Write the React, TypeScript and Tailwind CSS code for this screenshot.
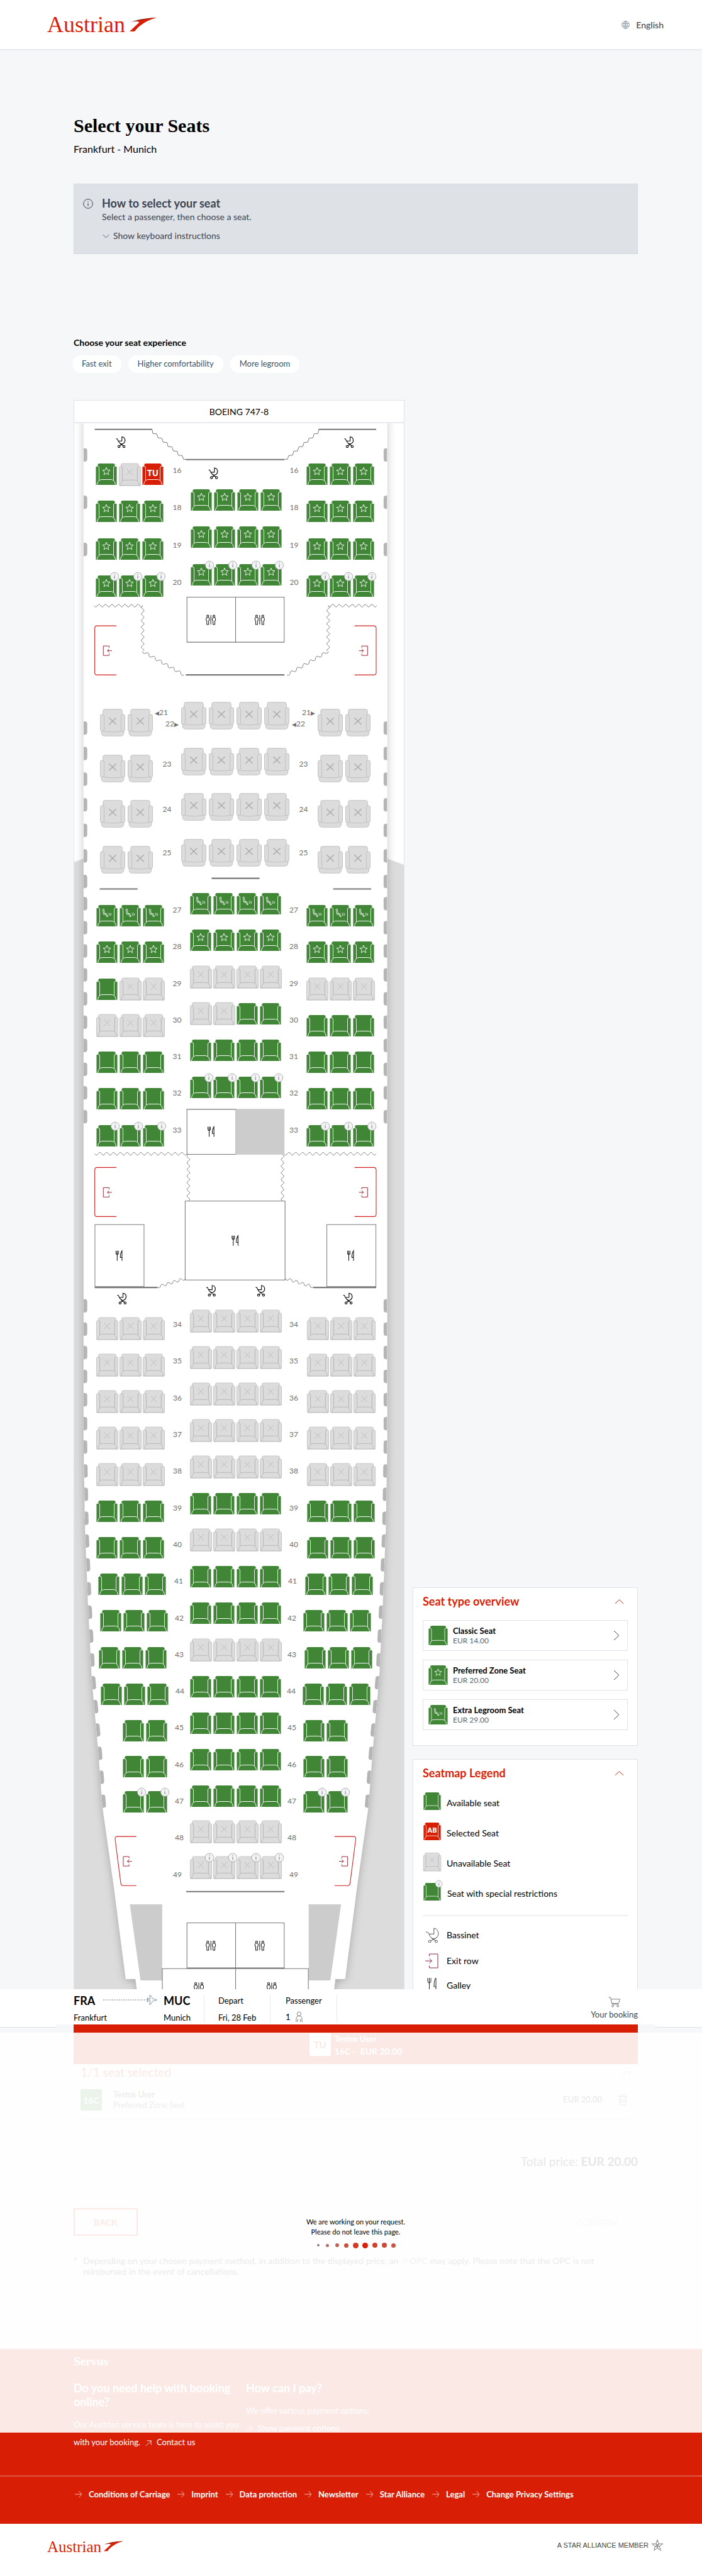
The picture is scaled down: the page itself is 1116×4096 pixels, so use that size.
import type { ReactNode } from "react";

const SANS = "font-['Lato','Noto_Sans',sans-serif]";
const SERIF = "font-['Liberation_Serif',serif]";

type Kind = "plain" | "star" | "legroom" | "off" | "selected";

const STAR = Array.from({ length: 10 }, (_, i) => {
  const r = i % 2 === 0 ? 7.4 : 3.3;
  const a = (Math.PI / 5) * i - Math.PI / 2;
  return `${(19 + r * Math.cos(a)).toFixed(1)},${(14.5 + r * Math.sin(a)).toFixed(1)}`;
}).join(" ");

function SeatIcon({ kind, info, initials = "TU", className }: { kind: Kind; info?: boolean; initials?: string; className?: string }) {
  const off = kind === "off";
  const fill = off ? "#dcdcdc" : kind === "selected" ? "#d81e05" : "#418537";
  const line = off ? "#b8b8b8" : "#ffffff";
  const edge = off ? "#c4c4c4" : "none";
  return (
    <svg viewBox="0 0 38 39" overflow="visible" className={className} aria-hidden="true">
      <path d="M3.3 39V3.2Q3.3 0 6.5 0H31.5Q34.7 0 34.7 3.2V39Z" fill={fill} stroke={edge} strokeWidth="1" />
      <path d="M0 7.2Q0 5.5 1.8 5.5H3.6Q5.8 5.5 5.8 8V39H1Q0 39 0 38Z" fill={fill} stroke={edge} />
      <path d="M38 7.2Q38 5.5 36.2 5.5H34.4Q32.2 5.5 32.2 8V39H37Q38 39 38 38Z" fill={fill} stroke={edge} />
      <path d="M3.2 5.2Q5.8 5.2 5.8 8V33.5M34.8 5.2Q32.2 5.2 32.2 8V33.5" fill="none" stroke={line} />
      <path d="M2.4 38.7C3.4 32 6.6 29.3 11 29.3H27C31.4 29.3 34.6 32 35.6 38.7" fill={fill} stroke={line} strokeWidth="1.1" />
      {off && <path d="M0.5 39H37.5M13.5 9.5L24 20.5M24 9.5L13.5 20.5" fill="none" stroke="#b8b8b8" />}
      {kind === "star" && <polygon points={STAR} fill="none" stroke="#fff" strokeLinejoin="round" />}
      {kind === "legroom" && (
        <g fill="none" stroke="#fff" strokeWidth="1">
          <circle cx="12.6" cy="8.6" r="1.4" />
          <path d="M11.6 10.6L12.8 17H16.6L18.4 21.2H20.4L18.2 15.6H14.8L14 10.6M22 14.4L24 17L22 19.6M25 14.4L27 17L25 19.6" />
        </g>
      )}
      {kind === "selected" && (
        <text x="19" y="22.4" textAnchor="middle" fontSize="15.5" fontWeight="700" fill="#fff" fontFamily="Noto Sans, sans-serif">
          {initials}
        </text>
      )}
      {info && (
        <g>
          <circle cx="34" cy="2" r="7.6" fill="#f3f4f6" stroke="#9a9a9a" strokeWidth="0.9" />
          <path d="M34 0.4V6M34 -2.6V-1.2" stroke="#777" strokeWidth="1.1" />
        </g>
      )}
    </svg>
  );
}

function BusinessIcon() {
  return (
    <svg viewBox="0 0 46 50" className="h-[44px] w-[40px]" aria-hidden="true">
      <g fill="#dcdcdc" stroke="#bcbcbc">
        <path d="M2.5 40H43.5V43Q43.5 49.5 37.5 49.5H8.5Q2.5 49.5 2.5 43Z" />
        <path d="M5.5 40V3.5Q5.5 .5 8.5 .5H37.5Q40.5 .5 40.5 3.5V40L38.5 41Q23 43.5 7.5 41Z" />
        <rect x=".5" y="10" width="7" height="31" rx="3.4" />
        <rect x="38.5" y="10" width="7" height="31" rx="3.4" />
      </g>
      <path d="M16.5 16L29.5 28.5M29.5 16L16.5 28.5" stroke="#ababab" strokeWidth="1.7" />
    </svg>
  );
}

const KINDS: Record<string, Kind> = { p: "plain", s: "star", l: "legroom", x: "off", t: "selected" };

type Row = { n: number; seats: string; info?: boolean; pad?: string };

function SeatRow({ row, letters }: { row: Row; letters: string }) {
  return (
    <div className={`flex items-start gap-[3px] ${row.pad ?? ""}`}>
      {row.seats.split("").map((c, i) => (
        <button
          key={i}
          type="button"
          disabled={c === "x"}
          aria-label={`Seat ${row.n}${letters[i]}`}
          className="flex h-[34px] w-[34px] items-center justify-center"
        >
          <SeatIcon kind={KINDS[c]} info={row.info} className={c === "x" ? "h-[35px] w-[35px] shrink-0" : "h-[34px] w-[34px]"} />
        </button>
      ))}
    </div>
  );
}

function BusinessColumn({ letters, className }: { letters: string; className: string }) {
  return (
    <div className={`grid h-[290px] auto-rows-fr ${className}`}>
      {[22, 23, 24, 25].map((n) => (
        <div key={n} className="flex items-start gap-1">
          {letters.split("").map((l) => (
            <button key={l} type="button" disabled aria-label={`Seat ${n}${l}`}>
              <BusinessIcon />
            </button>
          ))}
        </div>
      ))}
    </div>
  );
}

function Column({ rows, letters, className }: { rows: Row[]; letters: string; className: string }) {
  return (
    <div className={`grid auto-rows-fr ${className}`}>
      {rows.map((r) => (
        <SeatRow key={r.n} row={r} letters={letters} />
      ))}
    </div>
  );
}

function Numbers({ from, to, skip, className, pads }: { from: number; to: number; skip?: number; className: string; pads?: Record<number, string> }) {
  const list = Array.from({ length: to - from + 1 }, (_, i) => from + i).filter((n) => n !== skip);
  return (
    <div className={`grid auto-rows-fr text-center text-[12px] leading-5 text-[#6f6f6f] ${className}`}>
      {list.map((n) => (
        <div key={n} className={pads?.[n] ?? ""}>
          {n}
        </div>
      ))}
    </div>
  );
}

function BusinessNumbers({ side }: { side: "left" | "right" }) {
  const left = side === "left";
  return (
    <div className="mt-2 grid h-[290px] auto-rows-fr text-center text-[12px] leading-5 text-[#6f6f6f]">
      <div className="flex flex-col leading-[17px]">
        <span className={left ? "pl-[3px] text-left" : "pr-1 text-right"}>
          {left && <span className="text-[9px]">◀</span>}21{!left && <span className="text-[9px]">▶</span>}
        </span>
        <span className={left ? "pr-1 text-right" : "pl-1 text-left"}>
          {!left && <span className="text-[9px]">◀</span>}22{left && <span className="text-[9px]">▶</span>}
        </span>
      </div>
      <div className="pt-2">23</div>
      <div className="pt-2">24</div>
      <div className="pt-1">25</div>
    </div>
  );
}

function make(list: string, start: number, extra?: Record<number, Partial<Row>>): Row[] {
  return list.split(" ").map((seats, i) => ({ n: start + i, seats, ...(extra?.[start + i] ?? {}) }));
}

const frontLeft: Row[] = [
  { n: 16, seats: "sxt" },
  { n: 18, seats: "sss" },
  { n: 19, seats: "sss" },
  { n: 20, seats: "sss", info: true },
];
const frontRight = frontLeft.map((r) => ({ ...r, seats: "sss" }));
const frontCentre = make("ssss ssss ssss", 18, { 20: { info: true } });

const midLeft = make("lll sss pxx xxx ppp ppp ppp", 27, { 33: { info: true } });
const midCentre = make("llll ssss xxxx xxpp pppp pppp", 27, { 32: { info: true } });
const midRight = make("lll sss xxx ppp ppp ppp ppp", 27, { 33: { info: true } });

const rearLeft = make("xxx xxx xxx xxx xxx ppp ppp ppp ppp ppp ppp", 34, {
  41: { pad: "pl-[3px]" },
  42: { pad: "pl-[6px]" },
  43: { pad: "pl-[4px]" },
  44: { pad: "pl-[7px]" },
});
const rearRight = make("xxx xxx xxx xxx xxx ppp ppp ppp ppp ppp ppp", 34, {
  41: { pad: "justify-end pr-[3px]" },
  42: { pad: "justify-end pr-[6px]" },
  43: { pad: "justify-end pr-[4px]" },
  44: { pad: "justify-end pr-[7px]" },
});
const tailLeft = make("pp pp pp", 45, { 45: { pad: "pl-[42px]" }, 46: { pad: "pl-[42px]" }, 47: { pad: "pl-[42px]", info: true } });
const tailRight = make("pp pp pp", 45, {
  45: { pad: "justify-end pr-[42px]" },
  46: { pad: "justify-end pr-[42px]" },
  47: { pad: "justify-end pr-[42px]", info: true },
});
const rearCentre = make("xxxx xxxx xxxx xxxx xxxx pppp xxxx pppp pppp xxxx pppp pppp pppp", 34);
const tailCentre = make("pppp xxxx xxxx", 47, { 49: { info: true } });

/* ---------- cabin drawing ---------- */

function wave(x1: number, y1: number, x2: number, y2: number, cycles: number, amp = 2.4) {
  const len = Math.hypot(x2 - x1, y2 - y1);
  const ux = (x2 - x1) / len;
  const uy = (y2 - y1) / len;
  const steps = Math.round(cycles * 12);
  let d = "";
  for (let i = 0; i <= steps; i++) {
    const t = (i / steps) * len;
    const o = Math.sin((i / steps) * cycles * 2 * Math.PI) * amp;
    d += `${i ? "L" : "M"}${(x1 + ux * t - uy * o).toFixed(1)} ${(y1 + uy * t + ux * o).toFixed(1)}`;
  }
  return d;
}

const EDGE: [number, number][] = [
  [149, 750],
  [149, 2600],
  [151.6, 2750],
  [156.8, 2883],
  [163.5, 3017],
  [175.4, 3150],
  [183, 3250],
  [203, 3390],
  [225, 3559.5],
];

function edgeX(y: number) {
  for (let i = 1; i < EDGE.length; i++) {
    if (y <= EDGE[i][1]) {
      const [xa, ya] = EDGE[i - 1];
      const [xb, yb] = EDGE[i];
      return xa + ((xb - xa) * (y - ya)) / (yb - ya);
    }
  }
  return 225;
}

const WINDOWS = [
  807, 892, 977, 1298, 1344, 1390, 1436, 1482, 1528, 1574, 1614, 1657, 1699, 1742, 1785, 1827, 1869, 1912, 1954, 1997, 2337, 2379,
  2421, 2464, 2506, 2549, 2591, 2634, 2676, 2719, 2760, 2803, 2846, 2888, 2931, 2974, 3015, 3058, 3100, 3142, 3185, 3228,
];

const BODY = [...EDGE, [242.6, 3559.5], [246.5, 3590]] as [number, number][];
const BODY_POINTS = [...BODY, ...BODY.map(([x, y]) => [846 - x, y]).reverse()].map((p) => p.join(",")).join(" ");

function Stroller({ x, y }: { x: number; y: number }) {
  return (
    <g transform={`translate(${x} ${y})`} fill="none" stroke="#111" strokeWidth="1.3">
      <path d="M-8.500-6H-6.500L-4.500-2H2V-9.500C8-9 9.500-2 5.500 1.700C2.500 4.500-2 3.200-4.500-2M-3 7L5 1.800M5.500 7L-1.500 2.400" />
      <circle cx="-3.200" cy="7.800" r="1.900" />
      <circle cx="5.800" cy="7.800" r="1.900" />
    </g>
  );
}

function Cutlery({ x, y }: { x: number; y: number }) {
  return (
    <g transform={`translate(${x} ${y})`} fill="none" stroke="#111" strokeWidth="1.2">
      <path d="M-5.600-9V-4.500Q-5.600-2.500-3.400-2.500Q-1.200-2.500-1.200-4.500V-9M-3.400-9V9M5.200 9V-9Q2-4 2.200 3H5" />
    </g>
  );
}

function Toilet({ x, y }: { x: number; y: number }) {
  return (
    <g transform={`translate(${x} ${y})`} fill="none" stroke="#222" strokeWidth="1.2">
      <circle cx="-5.600" cy="-6.400" r="1.800" />
      <circle cx="5.600" cy="-6.400" r="1.800" />
      <path d="M0-8.500V8.500M-7.200 8.500V2.400L-8.400 1V-2.400Q-8.200-4.200-5.600-4.200T-2.800-2.400V1L-4 2.400V8.500ZM4 8.500V2.400L2.800 1V-2.400Q3-4.200 5.600-4.200T8.400-2.400V1L7.200 2.400V8.500Z" />
    </g>
  );
}

function ExitSign({ x, y }: { x: number; y: number }) {
  return (
    <g transform={`translate(${x} ${y})`} fill="none" stroke="#9d2235" strokeWidth="1.1">
      <path d="M3-5.500V-8.500H-7.500V8.500H3V5.500M8 0H0M3-3.200L0 0L3 3.200" />
    </g>
  );
}

function SideDecor() {
  return (
    <g fill="none" stroke="#777" strokeWidth="1.1">
      <path d="M169 773H272.6" strokeWidth="2.4" />
      <path d="M272.6 773l1.4 7.5 7 .6 2.2 7.2 7 .6 2.2 7.2 7 .6 2 7.2 7 .6 2.4 7.2 7 .6 2 7.2 7 .6 2.6 6.8h5" />
      <path d={wave(168, 1090, 256, 1090, 7.5)} />
      <path d={wave(255.5, 1090, 255.5, 1171, 6.8)} />
      <path d={wave(255.5, 1172, 330, 1214.5, 6.5)} />
      <path d={wave(169, 2075.7, 335.5, 2075.7, 13.5)} />
      <path d={wave(338, 2077, 338, 2160.5, 7)} />
      <path d={wave(282.5, 2315, 332.3, 2300, 4.5)} />
      <rect x="169.4" y="2203" width="88.6" height="111.5" fill="#fff" />
      <path d="M169 2316H282.5" strokeWidth="2.6" />
      <path d="M178 1599.4H246.5" strokeWidth="2.4" />
      <path d="M232.3 3425.3H290.8V3562.3H251.7Z" fill="#ccc" stroke="none" />
      <g stroke="#d02020" strokeWidth="1.2">
        <path d="M208 1126.3H173Q169 1126.3 169 1131V1210Q169 1214.5 173 1214.5H208" />
        <path d="M208 2100.3H173Q169 2100.3 169 2105V2184Q169 2188.5 173 2188.5H208" />
        <path d="M244 3303.3H210Q205.4 3303.3 205.8 3308L216 3387Q216.5 3391.7 220 3391.7H244" />
      </g>
      <ExitSign x={192} y={1171} />
      <ExitSign x={192} y={2145} />
      <ExitSign x={228} y={3348} />
    </g>
  );
}

function Cabin() {
  return (
    <svg viewBox="132 762 595 2816" preserveAspectRatio="none" className="absolute inset-0 h-full w-full" aria-hidden="true">
      <defs>
        <filter id="hull" x="-20%" y="-2%" width="140%" height="104%">
          <feDropShadow dx="0" dy="3" stdDeviation="8" floodColor="#000" floodOpacity="0.24" />
        </filter>
        <clipPath id="hullClip">
          <polygon points={BODY_POINTS} />
        </clipPath>
      </defs>
      <rect x="132" y="762" width="595" height="2816" fill="#fff" />
      <path d="M132 1551L149 1545H697L727 1556V3578H132Z" fill="#dcdcdc" />
      <polygon points={BODY_POINTS} fill="#fff" filter="url(#hull)" />
      <g clipPath="url(#hullClip)" fill="#b5b5b5">
        {WINDOWS.map((y) => {
          const x = edgeX(y + 12);
          const slope = (Math.atan((edgeX(y + 24) - edgeX(y)) / 24) * 180) / Math.PI;
          return (
            <g key={y}>
              <rect x={x - 8} y={y} width="14.5" height="24" rx="4.5" transform={`rotate(${-slope} ${x} ${y + 12})`} />
              <rect x={846 - x - 6.5} y={y} width="14.5" height="24" rx="4.5" transform={`rotate(${slope} ${846 - x} ${y + 12})`} />
            </g>
          );
        })}
      </g>
      <SideDecor />
      <g transform="translate(846 0) scale(-1 1)">
        <SideDecor />
      </g>
      <g fill="none" stroke="#777" strokeWidth="1.2">
        <path d="M333.5 827.3H511.5M333.5 1214.5H511.5M334 3402.4H511.5M380 1580.4H466.5" strokeWidth="2.4" />
        <path d="M335.5 1074.7H511V1155.7H335.5ZM423.3 1074.7V1155.7" />
        <path d="M335.5 1995.7H424V2076.7H335.5Z" fill="#fff" />
        <path d="M424 1995H511.5V2077.3H424Z" fill="#ccc" stroke="none" />
        <path d="M332.3 2160.7H512.6V2302.7H332.3Z" fill="#fff" />
        <path d="M335.5 3458.7H511V3539.7H335.5ZM423.3 3458.7V3600M291 3600V3541H554.6V3600" />
      </g>
      <Stroller x={216} y={796} />
      <Stroller x={628} y={796} />
      <Stroller x={383} y={852} />
      <Stroller x={218} y={2336} />
      <Stroller x={379} y={2322} />
      <Stroller x={468} y={2322} />
      <Stroller x={626} y={2336} />
      <Toilet x={378.6} y={1115.3} />
      <Toilet x={466.8} y={1115.3} />
      <Toilet x={378.6} y={3499.3} />
      <Toilet x={466.8} y={3499.3} />
      <Toilet x={356.9} y={3574.5} />
      <Toilet x={488.5} y={3574.5} />
      <Cutlery x={379} y={2036} />
      <Cutlery x={422.5} y={2232} />
      <Cutlery x={213} y={2259} />
      <Cutlery x={631} y={2259} />
    </svg>
  );
}

const NUM_LEFT: Record<number, string> = { 41: "pl-1", 42: "pl-1.5", 43: "pl-1.5", 44: "pl-2", 45: "pl-1.5", 46: "pl-1.5", 47: "pl-1.5", 48: "pl-1.5" };
const NUM_RIGHT: Record<number, string> = { 41: "pr-1", 42: "pr-1.5", 43: "pr-1.5", 44: "pr-2", 45: "pr-1.5", 46: "pr-1.5", 47: "pr-1.5", 48: "pr-1.5" };

function SeatMap() {
  return (
    <section className="w-[526px] shrink-0 border border-b-0 border-[#dfe3e8] bg-white">
      <h2 className="flex h-9 items-center justify-center border-b-2 border-[#e6e9ed] text-[14px] text-black">BOEING 747-8</h2>
      <div className="relative overflow-hidden pt-[64px] pb-[134px]">
        <Cabin />
        <div className="relative">
          <div className="grid grid-cols-[108px_43px_145px_39px_108px] pl-[34px]">
            <Column rows={frontLeft} letters="ABC" className="h-[237px]" />
            <Numbers from={16} to={20} skip={17} className="mt-px h-[237px]" />
            <Column rows={frontCentre} letters="DEFG" className="mt-[41px] h-[178px]" />
            <Numbers from={16} to={20} skip={17} className="mt-px h-[237px]" />
            <Column rows={frontRight} letters="HJK" className="h-[237px]" />
          </div>
          <div className="mt-[141px] grid grid-cols-[84px_45px_172px_45px_84px] items-start pl-[41px]">
            <BusinessColumn letters="AC" className="mt-[11px]" />
            <BusinessNumbers side="left" />
            <BusinessColumn letters="DEFG" className="" />
            <BusinessNumbers side="right" />
            <BusinessColumn letters="HK" className="mt-[11px]" />
          </div>
          <div className="mt-[3px] grid grid-cols-[108px_41px_145px_40px_108px] items-start pl-[35px]">
            <Column rows={midLeft} letters="ABC" className="mt-[19px] h-[408px]" />
            <Numbers from={27} to={33} className="mt-[17px] h-[408px]" />
            <Column rows={midCentre} letters="DEFG" className="h-[350px]" />
            <Numbers from={27} to={33} className="mt-[17px] h-[408px]" />
            <Column rows={midRight} letters="HJK" className="mt-[19px] h-[408px]" />
          </div>
          <div className="mt-[236px] grid grid-cols-[115px_34px_145px_34px_114px] items-start pl-[35px]">
            <div className="mt-3">
              <Column rows={rearLeft} letters="ABC" className="h-[640px]" />
              <Column rows={tailLeft} letters="AC" className="h-[170px]" />
            </div>
            <Numbers from={34} to={49} className="mt-[13px] h-[933px] pr-[6px]" pads={NUM_LEFT} />
            <div>
              <Column rows={rearCentre} letters="DEFG" className="h-[756px]" />
              <Column rows={tailCentre} letters="DEFG" className="h-[170px]" />
            </div>
            <Numbers from={34} to={49} className="mt-[13px] h-[933px] pl-[6px]" pads={NUM_RIGHT} />
            <div className="mt-3 [&_.grid>div:not([class*=justify-end])]:justify-end">
              <Column rows={rearRight} letters="HJK" className="h-[640px]" />
              <Column rows={tailRight} letters="HK" className="h-[170px]" />
            </div>
          </div>
        </div>
      </div>
    </section>
  );
}

/* ---------- side panels ---------- */

function Chevron({ d, className }: { d: string; className: string }) {
  return (
    <svg viewBox="0 0 16 16" fill="none" stroke="currentColor" className={className} aria-hidden="true">
      <path d={d} />
    </svg>
  );
}

const UP = "M1 11.5L8 5L15 11.5";
const RIGHT = "M4 .5L12 8L4 15.5";

function CardTitle({ children }: { children: ReactNode }) {
  return (
    <button type="button" className="flex w-full items-center justify-between pr-[6px] text-left text-[18px] leading-6 font-bold text-[#d81e05]">
      {children}
      <Chevron d={UP} className="h-[15px] w-[15px]" />
    </button>
  );
}

const TYPES: { name: string; price: string; kind: Kind }[] = [
  { name: "Classic Seat", price: "EUR 14.00", kind: "plain" },
  { name: "Preferred Zone Seat", price: "EUR 20.00", kind: "star" },
  { name: "Extra Legroom Seat", price: "EUR 29.00", kind: "legroom" },
];

function Sidebar() {
  return (
    <aside className="flex flex-1 flex-col justify-end">
      <section className="border border-[#dfe3e8] bg-white px-[15px] pt-[9px] pb-[24px]">
        <CardTitle>Seat type overview</CardTitle>
        <div className="mt-[18px] flex flex-col gap-[14px]">
          {TYPES.map((t) => (
            <button key={t.name} type="button" className="flex h-[49px] items-center border border-[#dfe3e8] px-[8px] text-left">
              <SeatIcon kind={t.kind} className="h-[31px] w-[31px]" />
              <span className="ml-2 flex-1">
                <span className="block text-[13px] leading-4 font-bold text-black">{t.name}</span>
                <span className="block text-[12px] leading-4 text-[#5a6675]">{t.price}</span>
              </span>
              <Chevron d={RIGHT} className="mr-px h-[17px] w-[16px] text-[#444]" />
            </button>
          ))}
        </div>
      </section>
      <section className="mt-[21px] h-[366px] overflow-hidden border border-b-0 border-[#dfe3e8] bg-white px-[15px] pt-[9px]">
        <CardTitle>Seatmap Legend</CardTitle>
        <ul className="mt-[11px] text-[14px] text-black">
          <li className="flex h-[48px] items-center">
            <SeatIcon kind="plain" className="mb-1 ml-px h-[28px] w-[28px]" />
            <span className="ml-[9px]">Available seat</span>
          </li>
          <li className="flex h-[48px] items-center">
            <SeatIcon kind="selected" initials="AB" className="mb-1 ml-px h-[28px] w-[28px]" />
            <span className="ml-[9px]">Selected Seat</span>
          </li>
          <li className="flex h-[48px] items-center">
            <SeatIcon kind="off" className="mb-1 ml-px h-[29px] w-[28px]" />
            <span className="ml-[9px]">Unavailable Seat</span>
          </li>
          <li className="flex h-[48px] items-center">
            <SeatIcon kind="plain" info className="mb-1 ml-px h-[28px] w-[28px]" />
            <span className="ml-[10px]">Seat with special restrictions</span>
          </li>
        </ul>
        <ul className="mt-[11px] border-t-2 border-[#eceef1] pt-[9px] text-[14px] text-black">
          <li className="flex h-[41px] items-center">
            <svg viewBox="-12 -12 24 24" className="ml-[2px] h-[24px] w-[26px]" aria-hidden="true">
              <g fill="none" stroke="#555" strokeWidth="1">
                <path d="M-10-5H-8.5Q-6.5-5-5.2-2L-4.5-1.8H2.8V-11C9.5-10.6 12.5-1 7 4C3.5 7-3 6-4.8-1.8M-2.5 9.4L6 4.6M6 9.4L-1.5 4.6" />
                <circle cx="-3.8" cy="10" r="1.9" />
                <circle cx="6.6" cy="10" r="1.9" />
              </g>
            </svg>
            <span className="ml-[10px]">Bassinet</span>
          </li>
          <li className="flex h-[41px] items-center">
            <svg viewBox="0 0 24 24" className="ml-[2px] h-[24px] w-[24px]" fill="none" stroke="#8c2a4a" aria-hidden="true">
              <path d="M8.5 4.5V1H22V23H8.5V19.5M2 12H12.5M8.5 8L12.5 12L8.5 16" />
            </svg>
            <span className="ml-[12px]">Exit row</span>
          </li>
          <li className="flex h-[36px] items-center">
            <svg viewBox="0 0 24 24" className="ml-[2px] h-[24px] w-[24px]" fill="none" stroke="#222" aria-hidden="true">
              <path d="M6 1V6Q6 9 8.5 9T11 6V1M8.5 1V23M19 23V1Q16 3 16 15H19" />
            </svg>
            <span className="ml-[12px]">Galley</span>
          </li>
        </ul>
      </section>
    </aside>
  );
}

/* ---------- brand marks ---------- */

function Brand({ small }: { small?: boolean }) {
  return (
    <a href="#home" className={`flex items-end text-[#d81e05] ${SERIF}`} aria-label="Austrian home">
      <span className={small ? "text-[25px] leading-[24px]" : "text-[36px] leading-[34px]"}>Austrian</span>
      <svg viewBox="0 0 43 22" className={small ? "mb-[5px] ml-1 h-[17px] w-[31px]" : "mb-[6px] ml-[7px] h-[22px] w-[43px]"} aria-hidden="true">
        <path d="M43 0C27 .6 12 3 1.400 7.200C6 6 11 5.600 15.500 6.400Z" fill="#7a2a22" />
        <path d="M43 0C30 1.200 18 3.600 8 6C11.500 5.800 14 6.200 15.500 7.400L0 22H8C13.500 14 26 4.600 43 0Z" fill="currentColor" />
      </svg>
    </a>
  );
}

function Diagonal() {
  return (
    <svg viewBox="0 0 12 12" className="inline-block h-[10px] w-[10px]" fill="none" stroke="currentColor" aria-hidden="true">
      <path d="M1 11L11 1M3 1H11V9" />
    </svg>
  );
}

const DOTS = [
  "h-[4px] w-[4px] bg-[#9b7b7b]",
  "h-[5px] w-[5px] bg-[#b0706a]",
  "h-[6px] w-[6px] bg-[#c06055]",
  "h-[7px] w-[7px] bg-[#c9503f]",
  "h-[9px] w-[9px] bg-[#d23a25]",
  "h-[9px] w-[9px] bg-[#d81e05]",
  "h-[8px] w-[8px] bg-[#d0402c]",
  "h-[8px] w-[8px] bg-[#cc4a38]",
  "h-[7px] w-[7px] bg-[#c65545]",
];

const LINKS = ["Conditions of Carriage", "Imprint", "Data protection", "Newsletter", "Star Alliance", "Legal", "Change Privacy Settings"];

function BookingBar() {
  return (
    <div className="relative flex h-[61px] border-b border-[#dfe3e8] bg-white pr-[102px] pl-[117px] text-[13px] text-black">
      <div className="my-[9px] flex h-[44px] border-r border-[#e6e9ed] pr-[22px]">
        <div className="flex w-[53px] flex-col justify-between">
          <span className="text-[18px] leading-[18px] font-bold">FRA</span>
          <span className="leading-[15px]">Frankfurt</span>
        </div>
        <svg viewBox="0 0 86 16" className="-ml-[6px] h-[16px] w-[86px]" fill="none" aria-hidden="true">
          <path d="M0 8H70" stroke="#8a97a6" strokeWidth="1.4" strokeDasharray="1.6 2" />
          <path d="M70 6.800H75L73.500 1H75.500L79.500 6.800H83.500L85.300 8L83.500 9.200H79.500L75.500 15H73.500L75 9.200H72.500L71 11H70L71 8L70 5H71L72.500 6.800" stroke="#7a8696" strokeWidth=".9" />
        </svg>
        <div className="ml-[10px] flex w-[42px] flex-col justify-between">
          <span className="text-[18px] leading-[18px] font-bold">MUC</span>
          <span className="leading-[15px]">Munich</span>
        </div>
      </div>
      <div className="my-[9px] flex h-[44px] w-[105px] flex-col justify-between border-r border-[#e6e9ed] pl-[22px]">
        <span className="leading-[18px]">Depart</span>
        <span className="leading-[15px]">Fri, 28 Feb</span>
      </div>
      <div className="my-[9px] flex h-[44px] w-[106px] flex-col justify-between border-r border-[#e6e9ed] pl-[24px]">
        <span className="leading-[18px]">Passenger</span>
        <span className="flex items-center gap-2 leading-[18px]">
          1
          <svg viewBox="0 0 12 19" className="h-[18px] w-[11px]" fill="none" stroke="#777" aria-hidden="true">
            <circle cx="6" cy="4.200" r="3.400" />
            <path d="M1 18.500V13Q1 8 6 8T11 13V18.500M3.600 18.500V13M8.400 18.500V13" />
          </svg>
        </span>
      </div>
      <a href="#booking" className="ml-auto flex flex-col items-center pt-[12px] text-[13px] leading-[18px] text-[#3d4a5a]">
        <svg viewBox="0 0 20 18" className="h-[17px] w-[20px]" fill="none" stroke="#777" aria-hidden="true">
          <path d="M0 1H3L6 12.500H16.500M4 4H19L17 11H5.700" />
          <circle cx="7" cy="15.500" r="1.600" />
          <circle cx="15.500" cy="15.500" r="1.600" />
        </svg>
        <span className="mt-[2px]">Your booking</span>
      </a>
    </div>
  );
}

function Selection() {
  return (
    <div className="pr-[102px] pl-[117px]">
      <div className="flex h-[63px] items-start justify-center bg-[#d81e05] pt-[13px] text-[14px] leading-5 font-bold text-white">
        <span className="mt-px flex h-[36px] w-[34px] items-center justify-center rounded-[2px] bg-white text-[15px] text-[#d81e05]">TU</span>
        <span className="ml-[6px]">
          <span className="block text-[13px] font-bold">Testos User</span>
          <span className="block">16C - &nbsp;EUR 20.00</span>
        </span>
      </div>
      <div className="px-[11px]">
        <button type="button" className="mt-px flex w-full items-center justify-between text-[19px] leading-[24px] text-[#d81e05]">
          1/1 seat selected
          <Chevron d={UP} className="h-[13px] w-[13px]" />
        </button>
        <div className="mt-[15px] flex items-center border-b border-[#c9ced6] pb-[13px]">
          <span className="flex h-[34px] w-[34px] items-center justify-center rounded-[2px] bg-[#418537] text-[14px] font-bold text-white">16C</span>
          <span className="ml-[18px] flex-1 text-[13px] leading-[17px] text-black">
            <span className="block">Testos User</span>
            <span className="block text-[#444]">Preferred Zone Seat</span>
          </span>
          <span className="text-[13px] text-black">EUR 20.00</span>
          <button type="button" aria-label="Remove seat" className="mr-[6px] ml-[26px]">
            <svg viewBox="0 0 14 18" className="h-[18px] w-[14px]" fill="none" stroke="#444" aria-hidden="true">
              <path d="M0 3.500H14M4.500 3.500V1H9.500V3.500M2 3.500V17H12V3.500M5 7V14M9 7V14" />
            </svg>
          </button>
        </div>
      </div>
      <p className="mt-[47px] border-t border-[#dfe3e8] pt-[7px] text-right text-[19px] leading-[24px] text-black">
        Total price: <b>EUR 20.00</b>
      </p>
      <div className="mt-[62px] flex justify-between">
        <button type="button" className="h-[44px] w-[102px] rounded-[2px] border-2 border-[#d81e05] text-[14px] font-bold text-[#d81e05]">
          BACK
        </button>
        <button type="button" className="h-[44px] w-[129px] text-[14px] font-bold text-[#c8c8c8]">
          CONFIRM
        </button>
      </div>
      <p className="mt-[31px] flex text-[14px] leading-[17px] text-[#222]">
        <span className="w-[15px] shrink-0">*</span>
        <span>
          Depending on your chosen payment method, in addition to the displayed price, an{" "}
          <a href="#opc" className="text-[#666]">
            <Diagonal /> OPC
          </a>{" "}
          may apply. Please note that the OPC is not reimbursed in the event of cancellations.
        </span>
      </p>
    </div>
  );
}

export default function App() {
  return (
    <div className={`min-h-screen bg-[#f5f7f9] text-[14px] ${SANS}`}>
      <header className="flex h-20 items-center justify-between border-b-2 border-[#e6eaee] bg-white pr-[61px] pl-[75px]">
        <Brand />
        <button type="button" className="flex items-center gap-[10px] text-[14px] font-medium text-[#3d4a5a]">
          <svg viewBox="0 0 14 14" className="h-[13px] w-[13px]" fill="none" stroke="#8793a0" aria-hidden="true">
            <circle cx="7" cy="7" r="6.300" />
            <ellipse cx="7" cy="7" rx="2.800" ry="6.300" />
            <path d="M7 .7V13.300M1 5H13M1 9H13" />
          </svg>
          English
        </button>
      </header>
      <main className="pr-[102px] pl-[117px]">
        <h1 className={`pt-[102px] text-[30px] leading-9 font-bold text-black ${SERIF}`}>Select your Seats</h1>
        <p className="mt-[7px] text-[16px] leading-6 text-black">Frankfurt - Munich</p>
        <section className="mt-[43px] flex h-[112px] border border-[#d5d9df] bg-[#dee1e6] pt-[18px] pl-[14px] text-[#3d4350]">
          <svg viewBox="0 0 16 16" className="mt-[5px] h-[16px] w-[16px]" fill="none" stroke="currentColor" aria-hidden="true">
            <circle cx="8" cy="8" r="7.300" />
            <path d="M8 6.500V12M8 4V5.200" />
          </svg>
          <div className="ml-[14px]">
            <h2 className="text-[18px] leading-6 font-bold">How to select your seat</h2>
            <p className="text-[14px] leading-5">Select a passenger, then choose a seat.</p>
            <button type="button" className="mt-[10px] flex items-center gap-[5px] text-[14px] leading-5">
              <Chevron d="M2 5L8 11L14 5" className="h-[13px] w-[13px]" />
              Show keyboard instructions
            </button>
          </div>
        </section>
        <h2 className="mt-[131px] text-[14px] leading-5 font-bold text-black">Choose your seat experience</h2>
        <div className="-ml-[2px] mt-[10px] flex gap-[11px] text-[13px] text-[#3d5366]">
          {["Fast exit", "Higher comfortability", "More legroom"].map((t) => (
            <button key={t} type="button" className="h-[28px] rounded-full bg-white px-[15px]">
              {t}
            </button>
          ))}
        </div>
        <div className="mt-[43px] flex gap-[13px]">
          <SeatMap />
          <Sidebar />
        </div>
      </main>
      <BookingBar />
      <div className="relative">
        <div className="mr-[75px] -mt-[5px] ml-[90px] h-[17px] bg-[#f5f7f9]" />
        <div className="-mt-[17px]">
          <Selection />
        </div>
        <div role="status" className="absolute inset-x-0 top-[13px] flex h-[636px] flex-col items-center bg-white/90 pt-[293px] pl-[15px] text-center text-[11px] leading-4 text-black">
          We are working on your request.
          <br />
          Please do not leave this page.
          <span className="mt-[8px] flex">
            {DOTS.map((d, i) => (
              <span key={i} className="flex h-[10px] w-[15px] items-center justify-center">
                <span className={`rounded-full ${d}`} />
              </span>
            ))}
          </span>
        </div>
        <footer className="mt-[115px] bg-[#d81e05] text-white">
          <div className="pt-[8px] pr-[102px] pl-[117px]">
            <h2 className={`text-[19px] leading-6 font-bold ${SERIF}`}>Servus</h2>
            <div className="mt-[19px] grid grid-cols-[274px_1fr]">
              <div>
                <h3 className="pr-2 text-[18px] leading-[22px] font-bold">Do you need help with booking online?</h3>
                <p className="mt-[11px] text-[13px] leading-[28px]">
                  Our Austrian service team is here to assist you with your booking.
                  <a href="#contact" className="ml-2">
                    <Diagonal />
                    <span className="ml-2">Contact us</span>
                  </a>
                </p>
              </div>
              <div>
                <h3 className="text-[18px] leading-[22px] font-bold">How can I pay?</h3>
                <p className="mt-[11px] text-[13px] leading-[28px]">We offer various payment options.</p>
                <a href="#pay" className="text-[13px] leading-[28px]">
                  <Diagonal />
                  <span className="ml-2">Show payment options</span>
                </a>
              </div>
            </div>
          </div>
          <nav className="mt-[39px] flex h-[77px] items-start gap-[12px] border-t-2 border-[#e0553f] pt-[18px] pl-[119px] text-[13px] leading-5 font-bold">
            {LINKS.map((l) => (
              <a key={l} href="#more" className="flex items-center gap-[10px]">
                <svg viewBox="0 0 12 12" className="h-[12px] w-[12px]" fill="none" stroke="#f4b5ab" aria-hidden="true">
                  <path d="M0 6H11M6.500 1L11 6L6.500 11" />
                </svg>
                {l}
              </a>
            ))}
          </nav>
        </footer>
        <div className="flex h-[83px] items-start justify-between bg-white pt-[25px] pr-[62px] pl-[75px]">
          <Brand small />
          <div className="flex items-center gap-[5px] font-['Liberation_Sans',sans-serif] text-[11px] text-[#444]">
            A STAR ALLIANCE MEMBER
            <svg viewBox="0 0 18 18" className="h-[18px] w-[18px]" fill="none" stroke="#777" strokeWidth="1" aria-hidden="true">
              <path d="M9 .5L11 6.500L9 9L7 6.500ZM17.500 6.800L12.500 11L9.600 9.400L11.200 7ZM14.200 17.300L9 13.500L9.400 10.300L12.600 11.200ZM3.800 17.300L5.400 11.200L8.600 10.300L9 13.500ZM.5 6.800L6.800 7L8.400 9.400L5.500 11Z" />
            </svg>
          </div>
        </div>
      </div>
    </div>
  );
}
